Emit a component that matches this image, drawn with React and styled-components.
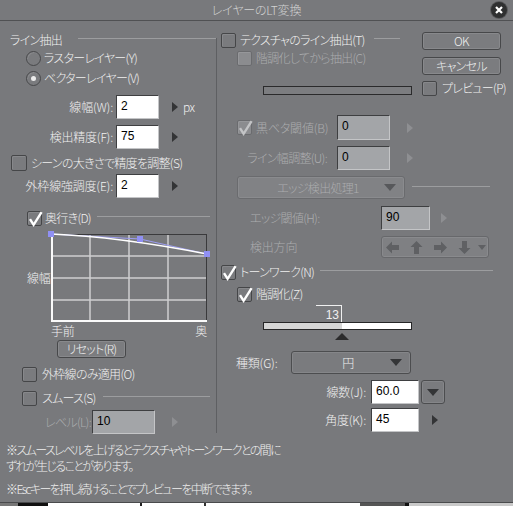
import React from 'react'
import styled, { createGlobalStyle } from 'styled-components'

const GlobalStyle = createGlobalStyle`
  html, body {
    margin: 0;
    padding: 0;
    background: #fff;
  }
  body {
    font-family: "Noto Sans CJK JP", "Noto Sans", sans-serif;
    font-size: 12px;
    font-weight: 300;
    font-feature-settings: "palt";
    letter-spacing: -0.7px;
  }
`

const Dialog = styled.div`
  width: 513px;
  height: 503px;
  box-sizing: border-box;
  background: #78797c;
  border-bottom: 1px solid #4a4b4d;
  display: flex;
  flex-direction: column;
`

const TitleBar = styled.div`
  height: 20px;
  border-bottom: 1px solid #505153;
  display: grid;
  grid-template-columns: 1fr auto 1fr;
  align-items: center;
  color: #d2d2d2;
  line-height: 14px;
  letter-spacing: -0.2px;
`

const CloseCell = styled.div`
  justify-self: end;
  padding-right: 6px;
  display: flex;
`

const CloseBtn = styled.span`
  width: 16px;
  height: 16px;
  border-radius: 50%;
  background: #2f3031;
  box-shadow: 0 0 0 1px #5a5b5d;
  display: flex;
  align-items: center;
  justify-content: center;
`

const Body = styled.div`
  display: grid;
  grid-template-columns: 217px 1fr;
  height: 415px;
`

const LeftCol = styled.div`
  position: relative;
  display: flex;
  flex-direction: column;
  &::after {
    content: '';
    position: absolute;
    top: 17px;
    bottom: 3px;
    right: 0;
    width: 1px;
    background: #5e5f62;
  }
`

const RightCol = styled.div`
  display: flex;
  flex-direction: column;
`

const Row = styled.div`
  display: flex;
  align-items: center;
  height: ${p => p.$h || 20}px;
  margin-top: ${p => p.$mt || 0}px;
  padding-left: ${p => p.$pl || 0}px;
  flex: none;
`

const Rule = styled.div`
  flex: ${p => (p.$w ? 'none' : 1)};
  width: ${p => (p.$w ? p.$w + 'px' : 'auto')};
  height: 1px;
  background: #9c9d9f;
  margin-left: ${p => p.$ml || 0}px;
  margin-right: ${p => p.$mr || 0}px;
  margin-bottom: 3px;
`

const Text = styled.span`
  color: ${p => (p.$dim ? '#abacae' : '#f0f0f0')};
  margin-left: ${p => p.$ml || 0}px;
  white-space: nowrap;
  line-height: 14px;
`

const Label = styled.span`
  flex: none;
  width: ${p => p.$w}px;
  box-sizing: border-box;
  padding-right: ${p => p.$pr || 0}px;
  color: ${p => (p.$dim ? '#abacae' : '#f0f0f0')};
  letter-spacing: ${p => (p.$kana ? -0.7 : -0.2)}px;
  white-space: nowrap;
  line-height: 14px;
  display: flex;
  align-items: center;
  justify-content: ${p => (p.$align === 'left' ? 'flex-start' : 'flex-end')};
`

const Box = styled.span`
  position: relative;
  flex: none;
  width: ${p => p.$s || 15}px;
  height: ${p => p.$s || 15}px;
  box-sizing: border-box;
  border: 1px solid ${p => (p.$dim ? '#6a6b6e' : '#454648')};
  border-radius: 2px;
  background: ${p => (p.$dim ? '#8b8c8f' : '#7a7b7e')};
  box-shadow: inset 1px 1px 0 rgba(255, 255, 255, 0.1);
  svg {
    position: absolute;
    left: -1px;
    top: -1px;
    overflow: visible;
  }
`

const RadioCircle = styled.span`
  position: relative;
  flex: none;
  width: 15px;
  height: 15px;
  box-sizing: border-box;
  border-radius: 50%;
  border: 1px solid #47484a;
  background: #7a7b7e;
  box-shadow: inset 1px 1px 0 rgba(255, 255, 255, 0.1);
  display: flex;
  align-items: center;
  justify-content: center;
  &::after {
    content: '';
    display: ${p => (p.$on ? 'block' : 'none')};
    width: 5px;
    height: 5px;
    border-radius: 50%;
    background: #ececec;
  }
`

const Input = styled.div`
  flex: none;
  width: ${p => p.$w}px;
  height: ${p => p.$h || 24}px;
  margin-left: ${p => p.$ml || 0}px;
  box-sizing: border-box;
  background: ${p => (p.$dim ? '#a3a5a8' : '#ffffff')};
  border: 1px solid;
  border-color: #3e3f41 #c4c5c7 #c4c5c7 #3e3f41;
  font-family: "Liberation Sans", "DejaVu Sans", sans-serif;
  font-weight: 400;
  letter-spacing: 0;
  font-size: 12px;
  line-height: 14px;
  color: #000;
  padding: 3px 0 0 4px;
  align-self: flex-start;
`

const Button = styled.div`
  width: ${p => p.$w || 79}px;
  height: ${p => p.$h || 18}px;
  margin-top: ${p => p.$mt || 0}px;
  margin-left: ${p => p.$ml || 0}px;
  box-sizing: border-box;
  border: 1px solid #47484a;
  border-radius: 3px;
  background: #7b7c7f;
  box-shadow: inset 0 0 0 1px #88898c;
  color: #f0f0f0;
  display: flex;
  align-items: center;
  justify-content: center;
  line-height: 14px;
  flex: none;
`

const Select = styled.div`
  flex: none;
  width: ${p => p.$w}px;
  height: ${p => p.$h || 23}px;
  box-sizing: border-box;
  border: 1px solid ${p => (p.$dim ? '#6a6b6e' : '#4c4d4f')};
  border-radius: 3px;
  background: ${p => (p.$dim ? '#818285' : '#7a7b7e')};
  box-shadow: inset 0 0 0 1px ${p => (p.$dim ? '#8a8b8e' : '#858689')};
  display: grid;
  grid-template-columns: 1fr 20px;
  align-items: center;
  color: ${p => (p.$dim ? '#abacae' : '#f0f0f0')};
  line-height: 14px;
  span {
    text-align: center;
    padding-left: 14px;
  }
`

const DropBtn = styled.div`
  flex: none;
  width: 24px;
  height: 24px;
  margin-left: 2px;
  box-sizing: border-box;
  border: 1px solid #4c4d4f;
  border-radius: 3px;
  background: #7a7b7e;
  box-shadow: inset 0 0 0 1px #858689;
  display: flex;
  align-items: center;
  justify-content: center;
`

const Track = styled.div`
  width: ${p => p.$w}px;
  height: ${p => p.$h}px;
  margin-top: ${p => p.$mt || 0}px;
  margin-left: ${p => p.$ml || 0}px;
  box-sizing: border-box;
  border: 1px solid #2a2a2b;
  background: #7c7d80;
`

const TopBlock = styled.div`
  display: flex;
  height: 76px;
`

const TopMain = styled.div`
  width: 205px;
  display: flex;
  flex-direction: column;
`

const Side = styled.div`
  width: 79px;
  padding-top: 11px;
  display: flex;
  flex-direction: column;
`

const DirGroup = styled.div`
  flex: none;
  width: 108px;
  height: 22px;
  box-sizing: border-box;
  border: 1px solid #67686b;
  border-radius: 3px;
  background: #7f8083;
  box-shadow: inset 0 0 0 1px #898a8d;
  display: flex;
  align-items: center;
  padding-left: 4px;
  gap: 11px;
`

const GraphRow = styled.div`
  display: flex;
  align-items: center;
  margin-top: 6px;
  padding-left: 27px;
  height: 88px;
`

const AxisRow = styled.div`
  display: flex;
  justify-content: space-between;
  width: 156px;
  margin-left: 51px;
  margin-top: 2px;
  height: 14px;
  line-height: 14px;
  color: #f0f0f0;
  letter-spacing: -0.2px;
`

const Slider = styled.div`
  margin-left: 46px;
  margin-top: 2px;
  width: 149px;
  display: flex;
  flex-direction: column;
`

const Tip = styled.div`
  width: 26px;
  height: 17px;
  margin-left: 53px;
  box-sizing: border-box;
  border-top: 1px solid #f0f0f0;
  border-right: 1px solid #f0f0f0;
  font-family: "Liberation Sans", sans-serif;
  font-weight: 400;
  letter-spacing: 0;
  font-size: 12px;
  line-height: 14px;
  color: #f0f0f0;
  text-align: right;
  padding: 2px 2px 0 0;
`

const Bar = styled.div`
  height: 8px;
  box-sizing: border-box;
  border: 1px solid #262627;
  background: linear-gradient(to right, #d6d6d6 ${p => p.$pct}%, #ffffff ${p => p.$pct}%);
`

const Thumb = styled.div`
  margin-top: 3px;
  width: 0;
  height: 0;
  border-left: 7px solid transparent;
  border-right: 7px solid transparent;
  border-bottom: 7px solid #2c2c2d;
`

const Footer = styled.div`
  margin-top: 6px;
  padding-left: 6px;
  color: #f0f0f0;
  line-height: 16px;
  white-space: nowrap;
  letter-spacing: -1.6px;
`

const NoteGap = styled.div`
  margin-top: 7px;
`

const Strip = styled.div`
  width: 513px;
  height: 3px;
  background: linear-gradient(
    to right,
    #777 0 18px,
    #111 18px 48px,
    #fff 48px 140px,
    #222 140px 142px,
    #fff 142px 204px,
    #333 204px 206px,
    #fff 206px 360px,
    #555 360px 405px,
    #111 405px 409px,
    #c9c9c9 409px 513px
  );
`

const Check = ({ dim, s = 15 }) => (
  <svg width={s} height={s} viewBox="0 0 15 15">
    <path
      d="M3 8.2 L6.6 13.8 L14.6 1.2"
      fill="none"
      stroke={dim ? '#c3c4c6' : '#ffffff'}
      strokeWidth="2.4"
      strokeLinejoin="miter"
    />
  </svg>
)

const CheckBox = ({ on, dim, s }) => (
  <Box $s={s} $dim={dim}>
    {on && <Check dim={dim} s={s} />}
  </Box>
)

const Arrow = ({ dim, ml = 0 }) => (
  <svg width="6" height="10" viewBox="0 0 6 10" style={{ marginLeft: ml, flex: 'none' }}>
    <polygon points="0,0 6,5 0,10" fill={dim ? '#8e8f92' : '#333436'} />
  </svg>
)

const Down = ({ color = '#343537' }) => (
  <svg width="12" height="7" viewBox="0 0 12 7">
    <polygon points="0,0 12,0 6,7" fill={color} />
  </svg>
)

const BlockArrow = ({ rot }) => (
  <svg width="13" height="13" viewBox="0 0 13 13" style={{ transform: `rotate(${rot}deg)`, flex: 'none' }}>
    <polygon points="0,6.5 6,0.5 6,4 13,4 13,9 6,9 6,12.5" fill="#5f6063" />
  </svg>
)

const Graph = () => (
  <svg width="156" height="88" viewBox="0 0 156 88" style={{ overflow: 'visible', flex: 'none' }}>
    {[39, 78, 117].map(x => (
      <line key={'v' + x} x1={x} y1="0" x2={x} y2="88" stroke="#cfcfd0" strokeWidth="1.5" />
    ))}
    {[22, 44, 66].map(y => (
      <line key={'h' + y} x1="0" y1={y} x2="156" y2={y} stroke="#cfcfd0" strokeWidth="1.5" />
    ))}
    <line x1="0" y1="0.5" x2="156" y2="0.5" stroke="#3a3a3c" />
    <line x1="155.5" y1="0" x2="155.5" y2="88" stroke="#3a3a3c" />
    <line x1="1" y1="0" x2="1" y2="88" stroke="#fafafa" strokeWidth="2" />
    <line x1="0" y1="87" x2="156" y2="87" stroke="#fafafa" strokeWidth="2" />
    <polyline points="0,0 89,5 156,20" fill="none" stroke="#9d9df2" strokeWidth="1" />
    <path d="M0,0 C50,2 110,11 156,20" fill="none" stroke="#ffffff" strokeWidth="1.4" />
    {[[0, 0], [89, 5], [156, 20]].map(([x, y]) => (
      <rect key={x} x={x - 3} y={y - 3} width="6" height="6" fill="#9090f4" />
    ))}
  </svg>
)

export default function App() {
  return (
    <>
      <GlobalStyle />
      <Dialog>
        <TitleBar>
          <span />
          <span>レイヤーのLT変換</span>
          <CloseCell>
            <CloseBtn>
              <svg width="8" height="8" viewBox="0 0 8 8">
                <path d="M1 1 L7 7 M7 1 L1 7" stroke="#fff" strokeWidth="2.2" />
              </svg>
            </CloseBtn>
          </CloseCell>
        </TitleBar>

        <Body>
          <LeftCol>
            <Row $mt={10} $h={17} $pl={10}>
              <Text>ライン抽出</Text>
              <Rule $ml={16} />
            </Row>
            <Row $pl={26}>
              <RadioCircle />
              <Text $ml={3}>ラスターレイヤー(Y)</Text>
            </Row>
            <Row $pl={26}>
              <RadioCircle $on />
              <Text $ml={3}>ベクターレイヤー(V)</Text>
            </Row>
            <Row $mt={7} $h={24}>
              <Label $w={113}>線幅(W):</Label>
              <Input $w={43} $ml={3}>2</Input>
              <Arrow ml={13} />
              <Text $ml={5}>px</Text>
            </Row>
            <Row $mt={6} $h={24}>
              <Label $w={113}>検出精度(F):</Label>
              <Input $w={43} $ml={3}>75</Input>
              <Arrow ml={13} />
            </Row>
            <Row $mt={4} $pl={11}>
              <CheckBox s={16} />
              <Text $ml={4}>シーンの大きさで精度を調整(S)</Text>
            </Row>
            <Row $mt={1} $h={24}>
              <Label $w={113}>外枠線強調度(E):</Label>
              <Input $w={43} $ml={3}>2</Input>
              <Arrow ml={13} />
            </Row>
            <Row $mt={10} $pl={27}>
              <CheckBox on />
              <Text $ml={3}>奥行き(D)</Text>
              <Rule $ml={6} $mr={7} />
            </Row>
            <GraphRow>
              <Label $w={24} $align="left">線幅</Label>
              <Graph />
            </GraphRow>
            <AxisRow>
              <span>手前</span>
              <span>奥</span>
            </AxisRow>
            <Button $w={69} $h={18} $mt={2} $ml={57}>リセット(R)</Button>
            <Row $mt={6} $pl={22}>
              <CheckBox />
              <Text $ml={5}>外枠線のみ適用(O)</Text>
            </Row>
            <Row $mt={4} $pl={22}>
              <CheckBox />
              <Text $ml={5}>スムース(S)</Text>
              <Rule $ml={7} $mr={7} />
            </Row>
            <Row $mt={2} $h={24}>
              <Label $w={91} $dim $kana>レベル(L):</Label>
              <Input $w={63} $ml={1} $dim>10</Input>
              <Arrow dim ml={17} />
            </Row>
          </LeftCol>

          <RightCol>
            <TopBlock>
              <TopMain>
                <Row $mt={10} $h={18} $pl={4}>
                  <CheckBox />
                  <Text $ml={4}>テクスチャのライン抽出(T)</Text>
                  <Rule $ml={9} $mr={22} />
                </Row>
                <Row $h={18} $pl={20}>
                  <CheckBox dim />
                  <Text $ml={4} $dim>階調化してから抽出(C)</Text>
                </Row>
                <Track $w={149} $h={9} $mt={19} $ml={46} />
              </TopMain>
              <Side>
                <Button>OK</Button>
                <Button $mt={7}>キャンセル</Button>
                <Row $mt={4} $h={18}>
                  <CheckBox />
                  <Text $ml={5}>プレビュー(P)</Text>
                </Row>
              </Side>
            </TopBlock>

            <Row $mt={18} $h={25} $pl={20}>
              <Label $w={100} $align="left" $dim>
                <CheckBox on dim />
                <Text $ml={4} $dim>黒ベタ閾値(B)</Text>
              </Label>
              <Input $w={53} $h={25} $dim>0</Input>
              <Arrow dim ml={17} />
            </Row>
            <Row $mt={6} $h={24}>
              <Label $w={120} $pr={10} $dim $kana>ライン幅調整(U):</Label>
              <Input $w={53} $dim>0</Input>
              <Arrow dim ml={17} />
            </Row>
            <Row $mt={6} $h={23} $pl={20}>
              <Select $w={168} $dim>
                <span>エッジ検出処理1</span>
                <Down color="#57585b" />
              </Select>
              <Rule $w={78} $ml={7} />
            </Row>
            <Row $mt={7} $h={24} $pl={33}>
              <Label $w={131} $align="left" $dim $kana>エッジ閾値(H):</Label>
              <Input $w={49} $dim>90</Input>
              <Arrow dim ml={11} />
            </Row>
            <Row $mt={6} $h={22} $pl={33}>
              <Label $w={131} $align="left" $dim>検出方向</Label>
              <DirGroup>
                <BlockArrow rot={0} />
                <BlockArrow rot={90} />
                <BlockArrow rot={180} />
                <BlockArrow rot={270} />
                <svg width="8" height="5" viewBox="0 0 8 5" style={{ marginLeft: -4 }}>
                  <polygon points="0,0 8,0 4,5" fill="#5f6063" />
                </svg>
              </DirGroup>
            </Row>
            <Row $mt={5} $h={18} $pl={4}>
              <CheckBox on />
              <Text $ml={4}>トーンワーク(N)</Text>
              <Rule $ml={6} $mr={20} />
            </Row>
            <Row $mt={4} $h={18} $pl={20}>
              <CheckBox on />
              <Text $ml={4}>階調化(Z)</Text>
            </Row>
            <Slider>
              <Tip>13</Tip>
              <Bar $pct={53} />
              <Thumb style={{ marginLeft: Math.round(149 * 0.53) - 7 }} />
            </Slider>
            <Row $mt={11} $h={23} $pl={19}>
              <Label $w={55} $align="left">種類(G):</Label>
              <Select $w={120}>
                <span>円</span>
                <Down />
              </Select>
            </Row>
            <Row $mt={6} $h={24}>
              <Label $w={149}>線数(J):</Label>
              <Input $w={48} $ml={5}>60.0</Input>
              <DropBtn>
                <Down />
              </DropBtn>
            </Row>
            <Row $mt={4} $h={24}>
              <Label $w={149}>角度(K):</Label>
              <Input $w={48} $ml={5}>45</Input>
              <Arrow ml={13} />
            </Row>
          </RightCol>
        </Body>

        <Footer>
          <div>※スムースレベルを上げるとテクスチャやトーンワークとの間に</div>
          <div>ずれが生じることがあります。</div>
          <NoteGap>※Escキーを押し続けることでプレビューを中断できます。</NoteGap>
        </Footer>
      </Dialog>
      <Strip />
    </>
  )
}
